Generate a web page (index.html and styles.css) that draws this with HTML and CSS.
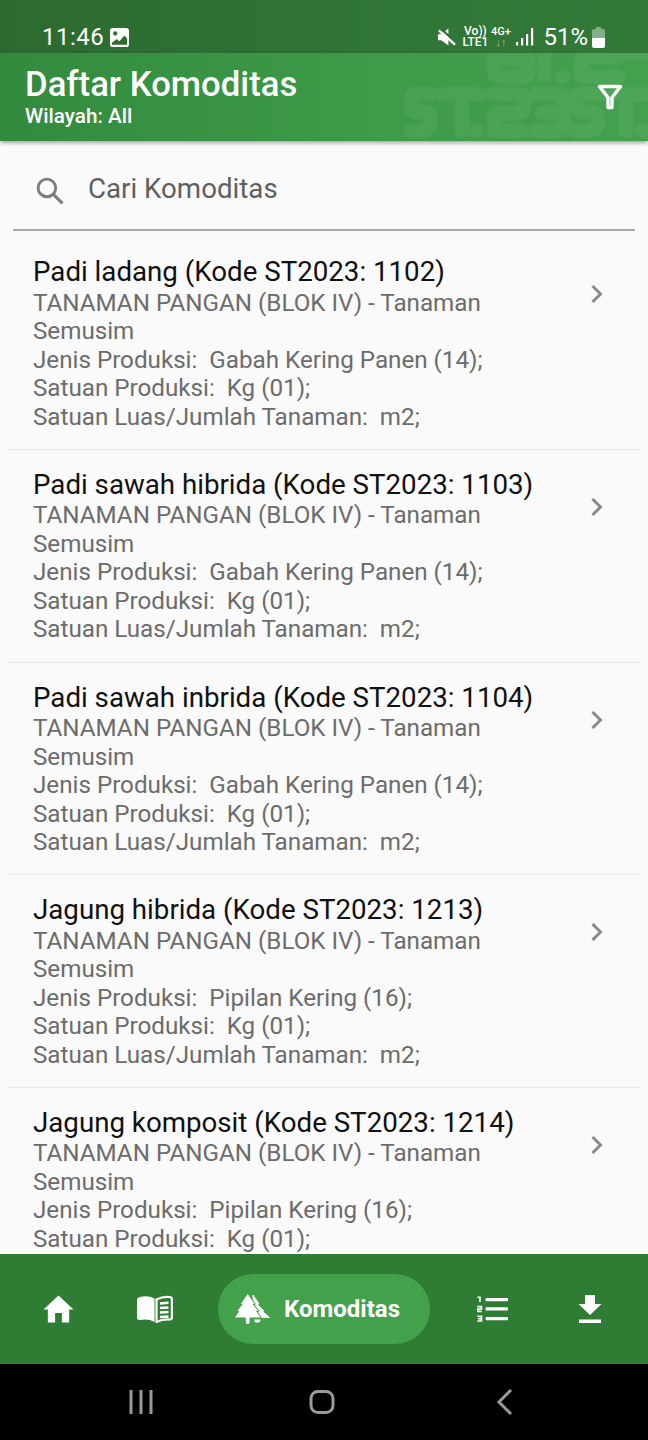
FILE: index.html
```html
<!DOCTYPE html>
<html lang="id">
<head>
<meta charset="utf-8">
<title>Daftar Komoditas</title>
<link rel="stylesheet" href="styles.css">
</head>
<body>
<div class="app">
  <div class="status">
    <div class="status-left">
      <span class="time">11:46</span>
      <svg class="ic-gallery" viewBox="0 0 20 20"><path fill="#fff" fill-rule="evenodd" d="M3 0h14a3 3 0 0 1 3 3v14a3 3 0 0 1-3 3H3a3 3 0 0 1-3-3V3a3 3 0 0 1 3-3zM5.500 3.500a2.300 2.300 0 1 0 .01 0zM2 15.500V17.500h16V11l-3-3-5 6-3-2.500z"/></svg>
    </div>
    <div class="status-right">
      <svg class="ic-mute" viewBox="0 0 20 20"><path fill="#fff" d="M1 6.500h3.500L12 .5v18L4.500 13H1z"/><path stroke="#2f7535" stroke-width="2.400" d="M3.500 0.500l17 15"/><path stroke="#fff" stroke-width="2.600" d="M2 2.500l17 15"/></svg>
      <div class="netstack"><span>Vo))</span><span>LTE1</span></div>
      <div class="netstack net2"><span>4G+</span><span class="arrows">↓↑</span></div>
      <svg class="ic-signal" viewBox="0 0 18 18"><g fill="#fff"><rect x="0" y="14" width="2.200" height="3.500"/><rect x="5" y="10" width="2.200" height="7.500"/><rect x="10" y="6" width="2.200" height="11.500"/><rect x="15" y="0" width="2.200" height="17.500"/></g></svg>
      <span class="pct">51%</span>
      <svg class="ic-batt" viewBox="0 0 13 21"><path fill="#fff" fill-opacity=".4" d="M4 0h5v2h2a2 2 0 0 1 2 2v7H0V4a2 2 0 0 1 2-2h2z"/><path fill="#fff" d="M0 11h13v8a2 2 0 0 1-2 2H2a2 2 0 0 1-2-2z"/></svg>
    </div>
  </div>

  <header class="appbar">
    <svg class="pattern" viewBox="0 0 244 88">
      <g fill="none" stroke="#fff" stroke-width="15" stroke-linecap="round" stroke-linejoin="round">
        <path d="M26 41H12Q6 41 6 48Q6 59 14 59H20Q27 59 27 67Q27 78 16 78H6"/>
        <path d="M38 41H76M58 50V78"/>
        <path d="M72 78h1"/>
        <path d="M90 41H114Q121 41 121 48V52Q121 60 113 60H98Q90 60 90 68V78H118"/>
        <path d="M132 41H154Q160 41 160 48V52Q160 60 152 60H138M148 60H152Q160 60 160 68V72Q160 78 152 78H132"/>
        <path d="M198 41H178Q171 41 171 48Q171 59 179 59H186Q194 59 194 67Q194 78 184 78H171"/>
        <path d="M212 41H244M222 50V78"/>
        <path d="M238 78h6"/>
        <path d="M90 6V18Q90 24 98 24H120Q124 24 124 18V6M104 6H120"/>
        <path d="M140 0V22"/>
        <path d="M158 24h1"/>
        <path d="M214 4H184Q177 4 177 11V24H214M220 0H244"/>
      </g>
    </svg>
    <div class="appbar-text">
      <h1>Daftar Komoditas</h1>
      <p>Wilayah: All</p>
    </div>
    <svg class="ic-filter" viewBox="0 0 26 26"><path fill="none" stroke="#fff" stroke-width="3.400" stroke-linejoin="round" d="M2.500 2.500h21L15 13.500v10h-4v-10z"/></svg>
  </header>

  <div class="search">
    <svg class="ic-search" viewBox="0 0 28 28"><circle cx="11.500" cy="11.500" r="8.500" fill="none" stroke="#7d7d7d" stroke-width="2.800"/><path stroke="#7d7d7d" stroke-width="3" d="M17.500 17.500l9 9"/></svg>
    <span class="search-label">Cari Komoditas</span>
  </div>

  <main class="list">
    <div class="item">
      <div class="item-text">
        <div class="item-title">Padi ladang (Kode ST2023: 1102)</div>
        <div class="item-sub">TANAMAN PANGAN (BLOK IV) - Tanaman Semusim</div>
        <div class="item-sub">Jenis Produksi:&nbsp; Gabah Kering Panen (14);</div>
        <div class="item-sub">Satuan Produksi:&nbsp; Kg (01);</div>
        <div class="item-sub">Satuan Luas/Jumlah Tanaman:&nbsp; m2;</div>
      </div>
      <svg class="chev" viewBox="0 0 14 20"><path fill="none" stroke="#8a8a8a" stroke-width="3" d="M2.500 2l8 8-8 8"/></svg>
    </div>
    <div class="item">
      <div class="item-text">
        <div class="item-title">Padi sawah hibrida (Kode ST2023: 1103)</div>
        <div class="item-sub">TANAMAN PANGAN (BLOK IV) - Tanaman Semusim</div>
        <div class="item-sub">Jenis Produksi:&nbsp; Gabah Kering Panen (14);</div>
        <div class="item-sub">Satuan Produksi:&nbsp; Kg (01);</div>
        <div class="item-sub">Satuan Luas/Jumlah Tanaman:&nbsp; m2;</div>
      </div>
      <svg class="chev" viewBox="0 0 14 20"><path fill="none" stroke="#8a8a8a" stroke-width="3" d="M2.500 2l8 8-8 8"/></svg>
    </div>
    <div class="item">
      <div class="item-text">
        <div class="item-title">Padi sawah inbrida (Kode ST2023: 1104)</div>
        <div class="item-sub">TANAMAN PANGAN (BLOK IV) - Tanaman Semusim</div>
        <div class="item-sub">Jenis Produksi:&nbsp; Gabah Kering Panen (14);</div>
        <div class="item-sub">Satuan Produksi:&nbsp; Kg (01);</div>
        <div class="item-sub">Satuan Luas/Jumlah Tanaman:&nbsp; m2;</div>
      </div>
      <svg class="chev" viewBox="0 0 14 20"><path fill="none" stroke="#8a8a8a" stroke-width="3" d="M2.500 2l8 8-8 8"/></svg>
    </div>
    <div class="item">
      <div class="item-text">
        <div class="item-title">Jagung hibrida (Kode ST2023: 1213)</div>
        <div class="item-sub">TANAMAN PANGAN (BLOK IV) - Tanaman Semusim</div>
        <div class="item-sub">Jenis Produksi:&nbsp; Pipilan Kering (16);</div>
        <div class="item-sub">Satuan Produksi:&nbsp; Kg (01);</div>
        <div class="item-sub">Satuan Luas/Jumlah Tanaman:&nbsp; m2;</div>
      </div>
      <svg class="chev" viewBox="0 0 14 20"><path fill="none" stroke="#8a8a8a" stroke-width="3" d="M2.500 2l8 8-8 8"/></svg>
    </div>
    <div class="item">
      <div class="item-text">
        <div class="item-title">Jagung komposit (Kode ST2023: 1214)</div>
        <div class="item-sub">TANAMAN PANGAN (BLOK IV) - Tanaman Semusim</div>
        <div class="item-sub">Jenis Produksi:&nbsp; Pipilan Kering (16);</div>
        <div class="item-sub">Satuan Produksi:&nbsp; Kg (01);</div>
      </div>
      <svg class="chev" viewBox="0 0 14 20"><path fill="none" stroke="#8a8a8a" stroke-width="3" d="M2.500 2l8 8-8 8"/></svg>
    </div>
  </main>

  <nav class="bottom">
    <svg class="ic-home" viewBox="0 0 32 28"><path fill="#fff" d="M16 0L31.500 14.500h-4.500V28h-7.500V18h-7v10H5V14.500H.5z"/></svg>
    <svg class="ic-book" viewBox="0 0 36 28"><path fill="#fff" d="M3 2q8-2 14.500 1.500V27q-6-3.500-14.500-2q-3 .3-3-2V5q0-2.500 3-3z"/><path fill="none" stroke="#fff" stroke-width="2.200" d="M19.500 4.500q6-3 13-2.500q2.400 .2 2.400 2.500v18q0 2-2.400 2q-7-.5-13 2.500z"/><path stroke="#fff" stroke-width="2.600" d="M23 8.500l8.500-.8M23 13l8.500-.5M23 17.500l8.500-.5M23 22l8.500-.5"/></svg>
    <div class="pill">
      <svg class="ic-trees" viewBox="0 0 36 30">
        <path fill="#fff" stroke="#fff" stroke-linejoin="round" d="M19 1L25 10H23L30 17H28L35.500 23.500H20z"/>
        <path fill="#fff" d="M20 25.500h6.500a3.250 3.250 0 0 1-6.500 0z"/>
        <path fill="#fff" stroke="#43a04b" stroke-width="2" paint-order="stroke" stroke-linejoin="round" d="M13.700 0L20.500 10H18.500L24.200 17H22L26.500 23.500H15.600V28a1.900 1.900 0 0 1-3.800 0V23.500H.9L5.400 17H3.200L8.900 10H6.900z"/>
      </svg>
      <span>Komoditas</span>
    </div>
    <svg class="ic-list" viewBox="0 0 31 26"><g fill="#fff"><rect x="8.500" y="2" width="22.500" height="3.200" rx="1"/><rect x="8.500" y="11.200" width="22.500" height="3.200" rx="1"/><rect x="8.500" y="21" width="22.500" height="3.200" rx="1"/></g><g fill="none" stroke="#fff" stroke-width="1.600"><path d="M.5 1.200H3V6"/><path d="M.3 10.600H4.500V13H.8v2.400H4.700"/><path d="M.3 20.300H4.500V25H.3M1 22.600H4"/></g></svg>
    <svg class="ic-download" viewBox="0 0 24 28"><path fill="#fff" d="M7 0h10v9h6.500L12 20 .5 9H7zM1 24.500h22V28H1z"/></svg>
  </nav>

  <div class="sysnav">
    <svg class="ic-recent" viewBox="0 0 26 26"><path stroke="#9a9a9a" stroke-width="3" d="M3 1v24M13 1v24M23 1v24"/></svg>
    <svg class="ic-homebtn" viewBox="0 0 26 26"><rect x="2" y="2.500" width="22" height="21" rx="7" fill="none" stroke="#9a9a9a" stroke-width="3"/></svg>
    <svg class="ic-back" viewBox="0 0 18 28"><path fill="none" stroke="#9a9a9a" stroke-width="3" d="M15 2L3 14l12 12"/></svg>
  </div>
</div>
</body>
</html>
```
FILE: styles.css
```css
* { box-sizing: border-box; }
html, body { margin: 0; padding: 0; }
body { font-family: Roboto, "Noto Sans", sans-serif; background: #fafafa; }
.app { width: 648px; height: 1440px; display: flex; flex-direction: column; overflow: hidden; background: #fafafa; }

.status { height: 53px; flex: none; display: flex; justify-content: space-between; align-items: flex-end; padding: 0 43px 0 42px; color: #fff; background: linear-gradient(90deg, #2c6a30, #2f7535 60%, #337a39); }
.status-left, .status-right { display: flex; align-items: center; }
.status-left { gap: 6px; }
.time { font-size: 24px; line-height: 32px; letter-spacing: .5px; }
.ic-gallery { width: 19px; height: 19px; }
.ic-mute { width: 19px; height: 19px; margin-right: 7px; }
.netstack { width: 24px; display: flex; flex-direction: column; align-items: center; font-size: 12px; line-height: 11.500px; font-weight: 500; margin-right: 4px; white-space: nowrap; }
.net2 { width: 19px; font-size: 11px; margin-right: 6px; }
.arrows { color: #9dbf9f; font-size: 11px; line-height: 10px; }
.ic-signal { width: 18px; height: 18px; margin-right: 9px; }
.pct { font-size: 24px; line-height: 32px; margin-right: 4px; }
.ic-batt { width: 13px; height: 21px; }

.appbar { position: relative; height: 88px; flex: none; display: flex; align-items: center; justify-content: space-between; padding: 0 25px 2px 25px; background: linear-gradient(90deg, #338a3e, #3c9a48 55%, #42a04e); box-shadow: 0 2px 4px rgba(0,0,0,.35); z-index: 2; }
.pattern { position: absolute; right: 0; top: 0; width: 244px; height: 88px; opacity: .06; filter: blur(1px); }
.appbar-text { position: relative; color: #fff; }
.appbar h1 { margin: 0; font-size: 34.700px; line-height: 40px; font-weight: 500; }
.appbar p { margin: 0; font-size: 20.700px; line-height: 24px; font-weight: 500; }
.ic-filter { position: relative; width: 26px; height: 26px; margin-top: 2px; }

.search { height: 90px; flex: none; margin: 0 13px; padding: 6px 0 0 22px; display: flex; align-items: center; gap: 24px; border-bottom: 2px solid #a9a9a9; }
.ic-search { width: 29px; height: 29px; margin-top: 4px; }
.search-label { font-size: 27.700px; color: #5f5f5f; }

.list { flex: 1; min-height: 0; overflow: hidden; padding: 6.300px 8px 0; }
.item { height: 212.700px; padding: 18px 36px 0 25px; display: flex; justify-content: space-between; border-bottom: 1px solid #e8e8e8; }
.item-text { width: 470px; }
.item-title { font-size: 27.700px; line-height: 33.400px; color: #111; white-space: nowrap; }
.item-sub { font-size: 24.200px; line-height: 28.500px; color: #6c6c6c; }
.chev { width: 14px; height: 20px; margin-top: 29px; flex: none; }

.bottom { height: 110px; flex: none; display: flex; align-items: center; background: #2f7d35; padding-left: 43px; }
.ic-home { width: 31px; height: 28px; }
.ic-book { width: 36px; height: 28px; margin-left: 63px; }
.pill { width: 212px; height: 70px; margin-left: 45px; border-radius: 35px; background: #43a04b; display: flex; align-items: center; gap: 14px; padding-left: 16px; color: #fff; font-size: 24px; font-weight: 700; }
.ic-trees { width: 36px; height: 30px; }
.ic-list { width: 31px; height: 26px; margin-left: 47px; }
.ic-download { width: 24px; height: 28px; margin-left: 70px; }

.sysnav { height: 76px; flex: none; background: #000; display: flex; align-items: center; padding-left: 128px; }
.ic-recent { width: 26px; height: 26px; }
.ic-homebtn { width: 26px; height: 26px; margin-left: 155px; }
.ic-back { width: 18px; height: 28px; margin-left: 161px; }
```
